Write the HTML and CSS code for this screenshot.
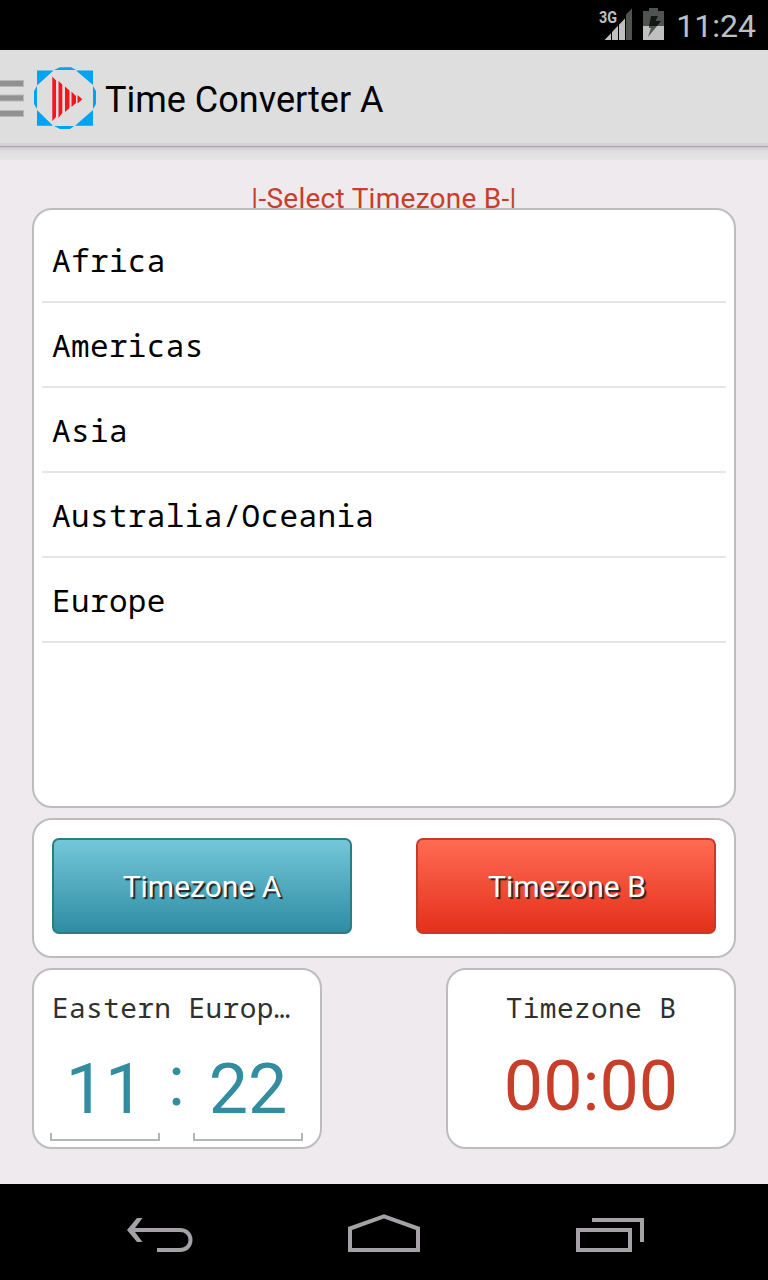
FILE: index.html
```html
<!DOCTYPE html>
<html lang="en">
<head>
<meta charset="utf-8">
<title>Time Converter</title>
<link rel="stylesheet" href="styles.css">
</head>
<body>
<div class="screen">
  <div class="status">
    <svg class="signal" width="36" height="34" viewBox="0 0 36 34">
      <text class="net" x="1" y="17" textLength="18" lengthAdjust="spacingAndGlyphs">3G</text>
      <path fill="#c0c0c0" d="M6.500 34L13 27.200V34ZM14 34V26.100L20 19.800V34ZM21 34V18.800L27 12.500V34Z"/>
      <path fill="#505451" d="M28 34V8.500L34 2.500V34Z"/>
    </svg>
    <svg class="battery" width="21" height="32" viewBox="0 0 21 32">
      <path fill="#505451" d="M6 0H15V3H21V18H0V3H6Z"/>
      <path fill="#c0c0c0" d="M0 18H21V32H0Z"/>
      <path fill="#141815" d="M8 8H15L12.500 13H18L14 18H6Z"/>
      <path fill="#505451" d="M6 18H14L5 29L8 20H6Z"/>
    </svg>
    <span class="clock">11:24</span>
  </div>
  <header class="bar">
    <svg class="menu" width="24" height="40" viewBox="0 0 24 40">
      <g fill="#b8b8b8"><path d="M0 2H24V9H0ZM0 16.500H24V23.500H0ZM0 32H24V39H0Z"/></g>
      <g fill="#919191"><path d="M0 3H23V8H0ZM0 17.500H23V22.500H0ZM0 33H23V38H0Z"/></g>
    </svg>
    <svg class="logo" width="64" height="64" viewBox="0 0 64 64">
      <path fill="#00a2f2" d="M4 4.500H20.500L4 19.500ZM43 4.500H60V19ZM4 44L20 59.700H4ZM60 44V59.700H42ZM21 4L27 1.200H38L43 4ZM21 60H41L37 63H27ZM4 20V43L1 38V25ZM60 20L63 25V38L60 43Z"/>
      <path fill="#f31620" d="M19.300 10.500L23 14.500V51L19.300 55ZM25.500 15L29.300 18.500V47L25.500 52ZM32 20.500L36.500 24.500V42L32 46ZM38.500 25.500L43 30V37L38.500 41ZM44.500 29L49.300 33.200L44.500 37.500Z"/>
    </svg>
    <h1 class="title">Time Converter A</h1>
  </header>
  <main class="content">
    <div class="prompt">|-Select Timezone B-|</div>
    <ul class="panel zones">
      <li>Africa</li>
      <li>Americas</li>
      <li>Asia</li>
      <li>Australia/Oceania</li>
      <li>Europe</li>
    </ul>
    <div class="panel actions">
      <button class="btn teal">Timezone A</button>
      <button class="btn red">Timezone B</button>
    </div>
    <div class="times">
      <section class="panel card">
        <div class="name">Eastern Europ…</div>
        <div class="edit"><span class="field">11</span><span class="colon">:</span><span class="field">22</span></div>
      </section>
      <section class="panel card">
        <div class="name center">Timezone B</div>
        <div class="result">00:00</div>
      </section>
    </div>
  </main>
  <nav class="nav">
    <svg width="768" height="96" viewBox="0 0 768 96" fill="none" stroke="#a4a2a4" stroke-width="4">
      <path d="M157 66H180C194 66 194 46 180 46H130"/>
      <path fill="#a4a2a4" stroke="none" d="M127 46L137 34H142.500L133.500 46L142.500 58H137Z"/>
      <path d="M350 66V44.500L384 32.300L418 44.500V66Z"/>
      <path d="M578 46H630V66H578ZM592 36H642V58"/>
    </svg>
  </nav>
</div>
</body>
</html>
```

FILE: styles.css
```css
* { box-sizing: border-box; }
body { margin: 0; }
.screen {
  width: 768px; height: 1280px;
  display: flex; flex-direction: column;
  background: #eeeaed;
  font-family: Roboto, sans-serif;
  overflow: hidden;
}
.status {
  height: 50px; flex: none;
  background: #000; color: #c0c0c0;
  display: flex; justify-content: flex-end;
  padding: 6px 12px 0 0;
}
.signal { margin-right: 9px; }
.net { font: 700 17px Roboto, sans-serif; fill: #c0c0c0; }
.battery { margin: 2px 12px 0 0; }
.clock { width: 80px; text-align: right; font-size: 32px; line-height: 40px; font-weight: 400; }
.bar {
  height: 97px; flex: none;
  display: flex; align-items: flex-start;
  background: #dedede;
  border-bottom: 1px solid #a9a7a9;
  box-shadow: inset 0 -3px #d2d2d2;
}
.menu { margin-top: 28px; }
.logo { margin: 16px 0 0 9px; }
.title { margin: 29px 0 0 8px; font-size: 36px; line-height: 42px; font-weight: 400; color: #000; white-space: nowrap; }
.content {
  flex: 1; padding: 35px 32px 0;
  display: flex; flex-direction: column;
  background: linear-gradient(#c8c6c9 0, #dcdadd 3px, #e2e1e3 7px, #e4e4e4 13px, transparent 13px);
}
.prompt { height: 26px; line-height: 34px; text-align: center; font-size: 28px; letter-spacing: 0.27px; color: #c73e2b; white-space: nowrap; }
.panel { background: #fff; border: 2px solid #bdbcbe; border-radius: 20px; }
.zones {
  position: relative;
  height: 600px; margin: 0 0 10px; padding: 8px; list-style: none;
  font-family: "Noto Sans Mono", "DejaVu Sans Mono", monospace;
  font-size: 31px; letter-spacing: 0.36px; color: #000;
}
.zones li { height: 85px; padding-left: 10px; line-height: 84px; border-bottom: 2px solid #e5e5e5; }
.actions { height: 140px; margin-bottom: 10px; padding: 18px; display: flex; justify-content: space-between; }
.btn {
  width: 300px; height: 96px; padding: 0; border-radius: 7px;
  font: 400 30px Roboto, sans-serif; color: #fff;
  text-shadow: 2px 2px 1px #222;
}
.teal { border: 2px solid #2d7d80; background: linear-gradient(#73c7d8, #2e8ca3); }
.red { padding-left: 2px; border: 2px solid #c53b27; background: linear-gradient(#ff6b52, #e4301b); }
.times { display: flex; justify-content: space-between; }
.card { width: 290px; height: 181px; padding: 20px 16px 0; display: flex; flex-direction: column; }
.name {
  padding-left: 2px; height: 37px; line-height: 35px; white-space: nowrap;
  font-family: "Noto Sans Mono", "DejaVu Sans Mono", monospace;
  font-size: 27.8px; letter-spacing: 0.38px; color: #303030;
}
.center { text-align: center; padding: 0; }
.edit { display: flex; justify-content: space-between; width: 253px; color: #328d9e; font-size: 70px; }
.field {
  width: 110px; height: 114px; line-height: 125px; text-align: center;
  background: linear-gradient(#b5b5b5, #b5b5b5) 0 100% / 100% 2px no-repeat,
    linear-gradient(#b5b5b5, #b5b5b5) 0 100% / 2px 8px no-repeat,
    linear-gradient(#b5b5b5, #b5b5b5) 100% 100% / 2px 8px no-repeat;
}
.colon { line-height: 109px; }
.result { font-size: 70px; line-height: 119px; text-align: center; color: #c73e2b; }
.nav { height: 96px; flex: none; background: #000; }
.nav svg { display: block; }
```
